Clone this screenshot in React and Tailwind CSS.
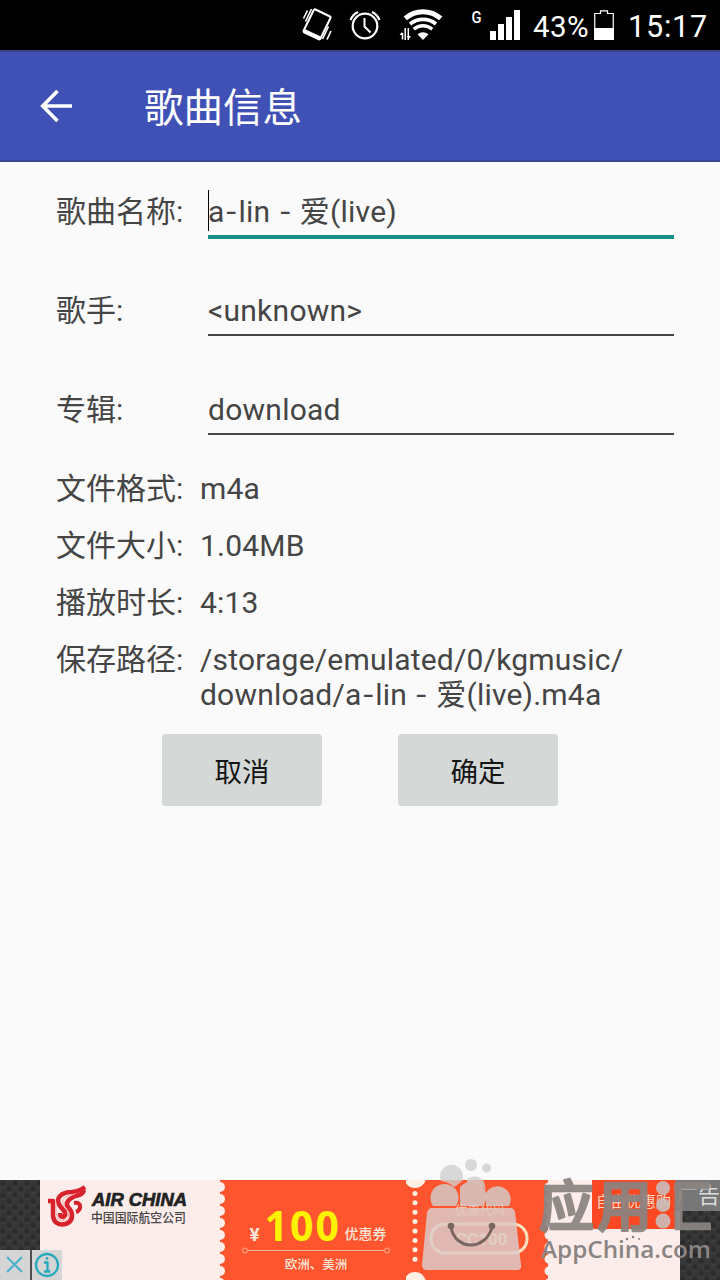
import React, { useState } from "react";

const FONT = "font-[Roboto,'Noto_Sans_CJK_SC',sans-serif]";

function StatusBar() {
  return (
    <div className="flex h-[50px] bg-black text-white">
      <svg width="532" height="50" viewBox="0 0 532 50" fill="none" stroke="#fff" className="shrink-0">
        {/* Vibrate */}
        <path d="M315.5 9.5 L330 16.5 Q331 17 330.5 18 L320.5 38.5 Q320 40 318.5 39.2 L304.5 32.5 Q303 31.8 303.8 30.3 L313.5 10.5 Q314.3 9 315.5 9.5 Z" strokeWidth="2" />
        <path d="M304 30.5 L320 38" strokeWidth="3.5" />
        <path d="M307.5 10.5 L303.5 18.5 M311.5 9 L305.5 21.5 M328.5 26.5 L322.5 39 M331 31 L327 39.5" strokeWidth="1.6" />
        {/* Alarm */}
        <circle cx="365" cy="26" r="12.3" strokeWidth="2.2" />
        <path d="M364.5 18 V26.5 L370.5 32.5" strokeWidth="2" />
        <path d="M350.5 20 A15 15 0 0 1 358 12 M372 12 A15 15 0 0 1 379.5 20" strokeWidth="2.2" />
        {/* Wifi */}
        <path d="M405.3 18.3 A27 27 0 0 1 440.7 18.3" strokeWidth="5" />
        <path d="M410 24 A20.5 20.5 0 0 1 436 24" strokeWidth="3.6" />
        <path d="M413.8 29.2 A14 14 0 0 1 432.2 29.2" strokeWidth="3.4" />
        <path d="M417.5 34.2 Q423 30.5 428.5 34.2 L423 40 Z" fill="#fff" stroke="none" />
        <path d="M402.5 39.5 V33 M405.2 40 V28 M408.3 28 V40" strokeWidth="1.5" />
        <path d="M399.5 35 L402 32 L403 35 Z M407 36 L408.3 39.5 L411 36 Z" fill="#fff" stroke="none" />
        {/* Signal */}
        <g fill="#fff" stroke="none">
          <rect x="490" y="31" width="6" height="9" />
          <rect x="498" y="24" width="6" height="16" />
          <rect x="506" y="17" width="6" height="23" />
          <rect x="514" y="10" width="6" height="30" />
          <text x="471.5" y="23" fontSize="17" fontWeight="500" fontFamily="Roboto" textLength="10" lengthAdjust="spacingAndGlyphs">G</text>
        </g>
      </svg>
      <span className="w-[62px] pl-[1px] text-[29.5px] leading-[54px] tracking-[0.4px] whitespace-nowrap">43%</span>
      <svg width="20" height="50" viewBox="0 0 20 50" className="shrink-0">
        <path d="M0.75 39.5 V13.5 H6.5 V10.8 H13.5 V13.5 H19.25 V39.5 Z" fill="none" stroke="#fff" strokeWidth="1.2" />
        <rect x="0" y="28" width="20" height="12" fill="#fff" />
      </svg>
      <span className="pl-[14px] text-[30.5px] leading-[54px] tracking-[0.8px] whitespace-nowrap">15:17</span>
    </div>
  );
}

function Header() {
  return (
    <header className="flex h-[112px] items-center border-t-2 border-b-2 border-t-[#3b4385] border-b-[#39458f] bg-[#3f51b5] text-white">
      <button className="ml-10">
        <svg width="34" height="34" viewBox="0 0 34 34" fill="none" stroke="#fff" strokeWidth="3.6">
          <path d="M32 17 H3 M17.5 2 L2.7 17 L17.5 32" />
        </svg>
      </button>
      <h1 className="ml-[70px] pt-[6px] text-[39.5px] leading-none">歌曲信息</h1>
    </header>
  );
}

function Dashed({ text }) {
  return text.split("-").map((part, i) => (
    <React.Fragment key={i}>
      {i > 0 && <span className="mx-[2.7px] inline-block scale-x-[1.2]">-</span>}
      {part}
    </React.Fragment>
  ));
}

function Field({ label, value, active, onFocus }) {
  return (
    <div className="flex h-[99px]">
      <label className="w-[152px] pt-[29px] text-[30px] leading-[42px]">{label}</label>
      <div
        tabIndex={0}
        onFocus={onFocus}
        className={
          active
            ? "relative h-[77px] w-[466px] border-b-4 border-[#168f88] pt-[29px] outline-none"
            : "relative h-[75px] w-[466px] border-b-2 border-[#454545] pt-[29px] outline-none"
        }
      >
        {active && <span className="absolute top-[28px] left-0 h-[41px] w-[1px] bg-black" />}
        <p className="text-[30px] leading-[42px] tracking-[0.25px] whitespace-pre">
          <Dashed text={value} />
        </p>
      </div>
    </div>
  );
}

function Info({ label, children }) {
  return (
    <div className="flex min-h-[57px] text-[30px] leading-[35px]">
      <span className="w-[144px] shrink-0">{label}</span>
      <span className="tracking-[0.2px] whitespace-pre-line">
        <Dashed text={children} />
      </span>
    </div>
  );
}

// Dark woven backdrop on both sides of the ad
function Texture() {
  return (
    <svg width="40" height="100" className="block">
      <defs>
        <pattern id="weave" width="12" height="12" patternUnits="userSpaceOnUse">
          <rect width="12" height="12" fill="#363636" />
          <path d="M0 3 L3 0 L6 3 L3 6 Z M6 9 L9 6 L12 9 L9 12 Z" fill="#2b2b2b" />
          <path d="M6 3 L9 0 L12 3 M0 9 L3 6 L6 9" fill="none" stroke="#424242" />
        </pattern>
      </defs>
      <rect width="40" height="100" fill="url(#weave)" />
    </svg>
  );
}

function AdBanner() {
  const dots = [0, 1, 2, 3, 4, 5, 6, 7, 8];
  return (
    <footer className="relative flex h-[100px] bg-[#fcedeb]">
      <Texture />
      {/* Airline brand */}
      <div className="flex w-[180px] bg-[#fcedeb]">
        <svg width="48" height="60" viewBox="0 4 48 60" className="shrink-0" fill="none" stroke="#d8222c" strokeLinejoin="round">
          <path d="M8 25 H13 V40 Q14 48 22 48.5 Q32 48 32 39 Q32 35 28 31 Q25 27 30 23 Q34 20 39 19 Q43 18 44 14" strokeWidth="4.5" />
          <path d="M20 37 Q20 41 23 41 Q26 40 25 36 L20 30 Q16 24 20 20 Q24 16 32 16 Q40 15 45 11" strokeWidth="4.5" />
          <path d="M34 27 Q41 26 40 32 Q39 35 36 36" strokeWidth="4" />
          <path d="M16 26 V38 Q18 45 23 44.5 Q29 44 28.500 38 Q28 34 24 30 Q21 25 25 21.500 Q29 19 35 18" stroke="#f5a9a9" strokeWidth="1" />
        </svg>
        <svg width="105" height="60" viewBox="0 0 105 60" fill="#222">
          <text x="4" y="26" fontFamily="Liberation Sans" fontWeight="700" fontStyle="italic" fontSize="19" textLength="95" lengthAdjust="spacingAndGlyphs" stroke="#222" strokeWidth="0.7">AIR CHINA</text>
          <text x="3" y="42" fontFamily="Noto Sans CJK SC" fontSize="13" fontWeight="500" fill="#444" textLength="95" lengthAdjust="spacingAndGlyphs">中国国际航空公司</text>
        </svg>
      </div>
      {/* Coupon */}
      <div className="flex w-[328px] bg-[#ff552e]">
        <svg width="6" height="100" fill="#fcedeb">
          {dots.map((n) => <circle key={n} cx="0" cy={7 + n * 12} r="5" />)}
        </svg>
        <div className="flex w-[180px] flex-col items-center pt-[24px] text-[#ffe6d8]">
          <div className="flex h-[43px] items-baseline justify-center pl-1 whitespace-nowrap">
            <span className="w-[15px] text-[19px] font-bold">¥</span>
            <span className="w-[78px] text-[41px] leading-[42px] font-bold text-[#fff200] font-['Open_Sans'] tracking-[2px]">100</span>
            <span className="pl-[2px] text-[14px] font-medium -translate-y-[2px]">优惠券</span>
          </div>
          <svg width="150" height="7" className="shrink-0" fill="none" stroke="#ffb19b">
            <circle cx="4" cy="3.5" r="2.5" />
            <circle cx="146" cy="3.5" r="2.5" />
            <path d="M7 3.5 H143" />
          </svg>
          <span className="pt-[2px] text-[12.5px] leading-[17px] font-medium">欧洲、美洲</span>
        </div>
        <svg width="142" height="100" viewBox="406 0 142 100" fill="#fff0e4">
          <circle cx="415" cy="-3" r="11" />
          <circle cx="415" cy="103" r="11" />
          {dots.slice(1).map((n) => <circle key={n} cx="415" cy={4 + n * 9.4} r="2.5" />)}
          <text x="455" y="35" fontSize="12.5" fill="#ffc4ac">优惠代码</text>
          <rect x="431" y="44" width="96" height="29" rx="14" fill="none" stroke="#ffe0bd" strokeWidth="3" />
          <text x="456" y="65" fontSize="17" fontWeight="700" fill="#ffe5a0">CC100</text>
          {dots.map((n) => <circle key={n} cx="549" cy={7 + n * 12} r="4.5" fill="#fcedeb" />)}
        </svg>
      </div>
      <div className="flex w-[132px] pl-[44px]">
        <div className="h-[49px] w-[84px] overflow-hidden rounded-b-[3px] bg-[#fb4822] pt-[11px] pl-1 text-[15px] leading-[22px] text-[#ffd8c6] whitespace-nowrap">
          自由优惠购
        </div>
      </div>
      <Texture />
      <span className="absolute top-0 right-0 flex h-[31px] w-[44px] justify-end overflow-hidden bg-[#777] text-[22px] leading-[31px] whitespace-nowrap text-[#ddd]">广告</span>
      {/* Ad controls */}
      <div className="absolute bottom-0 left-0 flex h-[30px] w-[62px] bg-[#d5d5d5]">
        <svg width="62" height="30" fill="none" stroke="#29a9bd" strokeWidth="2.3">
          <path d="M7 7 L22 22 M22 7 L7 22" stroke="#4fb2cc" />
          <path d="M31 0 V30" stroke="#222" strokeWidth="1.5" />
          <circle cx="47" cy="15" r="11" />
          <path d="M44 12.5 H47.5 V21 M44 21.5 H50.5" />
          <circle cx="47" cy="8.5" r="1" fill="#29a9bd" strokeWidth="1" />
        </svg>
      </div>
      <Watermark />
    </footer>
  );
}

function Watermark() {
  return (
    <svg width="310" height="124" viewBox="410 1156 310 124" className="absolute right-0 bottom-0">
      <defs>
        <clipPath id="right-part">
          <rect x="674" y="1160" width="46" height="80" />
        </clipPath>
      </defs>
      <g fill="#cfcfcf" fillOpacity="0.8">
        <circle cx="471" cy="1165" r="6" />
        <circle cx="486.5" cy="1168" r="4.5" />
        <path d="M441 1181 A11.5 11.5 0 1 1 462 1181 Q456 1186 454 1187 Q449 1182 441 1181 Z" />
        <path d="M467 1179 Q478 1173 484 1182 L486 1190 Q478 1181 467 1182 Z" />
        <path d="M433 1206 A14 14 0 1 1 456 1206 Z" />
        <path d="M460 1206 V1187 A14.5 14.500 0 0 1 483 1206 Z" />
        <path d="M486 1206 V1193 A12 12 0 0 1 509 1206 Z" />
      </g>
      <path d="M432 1208 H510 Q514 1208 515 1212 L521 1265 Q522 1270 517 1270 H427 Q422 1270 422 1265 L427 1213 Q428 1208 432 1208 Z" fill="#dccac8" fillOpacity="0.85" />
      <g fill="none" stroke="#796660">
        <path d="M451 1227 C455 1251 486 1251 492 1227" strokeWidth="3" />
        <g fill="#796660" stroke="none">
          <circle cx="451" cy="1226" r="3.3" />
          <circle cx="492" cy="1226" r="3.3" />
        </g>
      </g>
      <g fill="#8b8481" stroke="#8b8481" strokeWidth="2.6" opacity="0.93" strokeLinejoin="round" fontFamily="Noto Sans CJK SC" fontWeight="500" fontSize="55">
        <text x="539" y="1226">应</text>
        <text x="597" y="1226">用</text>
        <text x="657" y="1226" clipPath="url(#right-part)">汇</text>
      </g>
      <g fill="#c9bdb9" fillOpacity="0.9">
        <circle cx="663" cy="1188" r="7" />
        <circle cx="663" cy="1205" r="7" />
        <circle cx="663" cy="1221" r="7.5" />
      </g>
      <text x="541" y="1258" fontFamily="Open Sans" fontWeight="600" fontSize="23" fill="#8a8582" textLength="170" lengthAdjust="spacingAndGlyphs">AppChina.com</text>
      <g fill="#8a8582">
        <circle cx="627" cy="1239" r="1.3" />
        <circle cx="633" cy="1237" r="1.3" />
        <circle cx="639" cy="1239" r="1" />
      </g>
    </svg>
  );
}

export default function App() {
  const [focused, setFocused] = useState("name");
  const song = { name: "a-lin - 爱(live)", singer: "<unknown>", album: "download" };

  return (
    <div className={`flex h-[1280px] w-[720px] flex-col overflow-hidden bg-[#fafafa] text-[#454545] ${FONT}`}>
      <StatusBar />
      <Header />
      <main className="flex-1 pl-14">
        {/* Editable tags */}
        <Field label="歌曲名称:" value={song.name} active={focused === "name"} onFocus={() => setFocused("name")} />
        <Field label="歌手:" value={song.singer} active={focused === "singer"} onFocus={() => setFocused("singer")} />
        <Field label="专辑:" value={song.album} active={focused === "album"} onFocus={() => setFocused("album")} />

        {/* File details */}
        <div className="pt-[12px]">
          <Info label="文件格式:">m4a</Info>
          <Info label="文件大小:">1.04MB</Info>
          <Info label="播放时长:">4:13</Info>
          <Info label="保存路径:">{"/storage/emulated/0/kgmusic/\ndownload/a-lin - 爱(live).m4a"}</Info>
        </div>

        <div className="mt-[22px] ml-[106px] flex gap-[76px] text-[27.5px] text-[#151515]">
          <button className="h-[72px] w-[160px] rounded-[4px] bg-[#d4d9d7] pt-[5px]">取消</button>
          <button className="h-[72px] w-[160px] rounded-[4px] bg-[#d4d9d7] pt-[5px]">确定</button>
        </div>
      </main>
      <AdBanner />
    </div>
  );
}
